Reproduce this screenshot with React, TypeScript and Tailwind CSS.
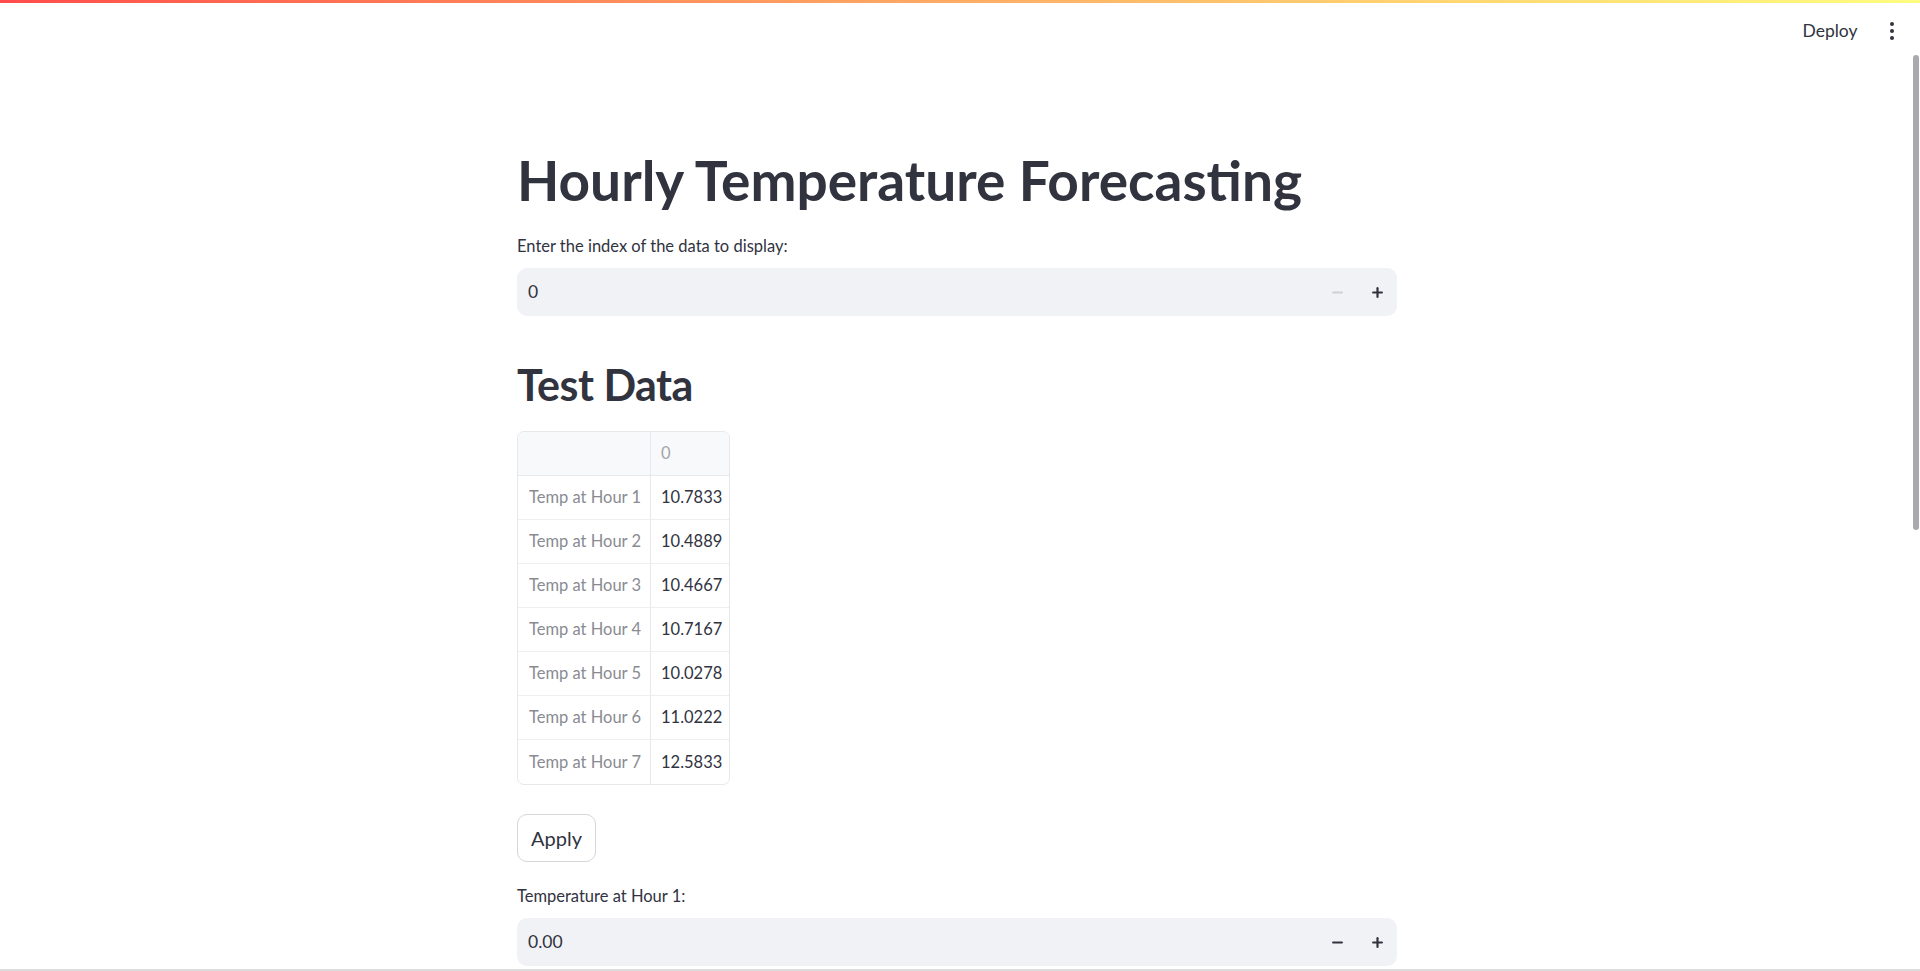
import { Minus, Plus } from "lucide-react";

const rows: [string, string][] = [
  ["Temp at Hour 1", "10.7833"],
  ["Temp at Hour 2", "10.4889"],
  ["Temp at Hour 3", "10.4667"],
  ["Temp at Hour 4", "10.7167"],
  ["Temp at Hour 5", "10.0278"],
  ["Temp at Hour 6", "11.0222"],
  ["Temp at Hour 7", "12.5833"],
];

const font = { fontFamily: "Lato, 'Noto Sans', sans-serif" };

function NumberInput({ value, minusDisabled }: { value: string; minusDisabled?: boolean }) {
  return (
    <div className="flex h-[48px] w-full items-center rounded-[10px] bg-[#f0f2f6]">
      <span className="flex-1 pl-[11px] text-[17.5px] text-[#31333f]">{value}</span>
      <button
        className={
          minusDisabled
            ? "flex h-full w-[40px] items-center justify-center text-[#cdd0d6]"
            : "flex h-full w-[40px] items-center justify-center text-[#31333f]"
        }
      >
        <Minus className="h-[15px] w-[15px]" strokeWidth={3.5} />
      </button>
      <button className="flex h-full w-[40px] items-center justify-center text-[#31333f]">
        <Plus className="h-[15px] w-[15px]" strokeWidth={3.5} />
      </button>
    </div>
  );
}

function DataTable() {
  return (
    <div className="w-[213px] overflow-hidden rounded-[7px] border border-[#e6e8ec] text-[16.5px]">
      <div className="flex h-[44px] border-b border-[#e6e8ec] bg-[#f8f9fb]">
        <div className="w-[133px] border-r border-[#e6e8ec]" />
        <div className="flex flex-1 items-center pl-[10px] text-[#a3a5ab]">0</div>
      </div>
      {rows.map(([label, val], i) => (
        <div
          key={label}
          className={
            i === rows.length - 1
              ? "flex h-[44px]"
              : "flex h-[44px] border-b border-[#eceef1]"
          }
        >
          <div className="flex w-[133px] items-center border-r border-[#e6e8ec] pl-[11px] text-[#898b92]">
            {label}
          </div>
          <div className="flex flex-1 items-center pl-[10px] text-[#31333f]">{val}</div>
        </div>
      ))}
    </div>
  );
}

export default function App() {
  return (
    <div className="relative h-[971px] w-full overflow-hidden bg-white" style={font}>
      <div className="h-[3px] w-full bg-gradient-to-r from-[#ff4b4b] to-[#fffd80]" />
      <header className="flex h-[56px] items-center justify-end pr-[26px]">
        <span className="text-[17.5px] text-[#31333f]">Deploy</span>
        <div className="ml-[32px] flex flex-col items-center gap-[2.5px]">
          <span className="h-[4.5px] w-[4.5px] rounded-full bg-[#31333f]" />
          <span className="h-[4.5px] w-[4.5px] rounded-full bg-[#31333f]" />
          <span className="h-[4.5px] w-[4.5px] rounded-full bg-[#31333f]" />
        </div>
      </header>
      <div className="absolute right-[1px] top-[55px] h-[475px] w-[6px] rounded-full bg-[#a9a9ae]" />

      <main className="w-[880px] pt-[88px] text-[#31333f]" style={{ marginLeft: 517 }}>
        <h1 className="text-[55px] font-bold leading-[66px]">Hourly Temperature Forecasting</h1>
        <p className="mt-[19px] text-[16.5px] leading-[28px]">Enter the index of the data to display:</p>
        <div className="mt-[8px]">
          <NumberInput value="0" minusDisabled />
        </div>

        <h2 className="mt-[42px] text-[43px] font-bold leading-[54px] tracking-[-0.5px]">Test Data</h2>
        <div className="mt-[19px]">
          <DataTable />
        </div>

        <button className="mt-[29px] flex h-[48px] w-[79px] items-center justify-center rounded-[10px] border border-[#d6d6d9] text-[20px] text-[#31333f]">
          Apply
        </button>

        <p className="mt-[20px] text-[16.5px] leading-[28px]">Temperature at Hour 1:</p>
        <div className="mt-[8px]">
          <NumberInput value="0.00" />
        </div>
      </main>
      <div className="absolute bottom-0 left-0 h-[2px] w-full bg-[#dcdcdc]" />
    </div>
  );
}
